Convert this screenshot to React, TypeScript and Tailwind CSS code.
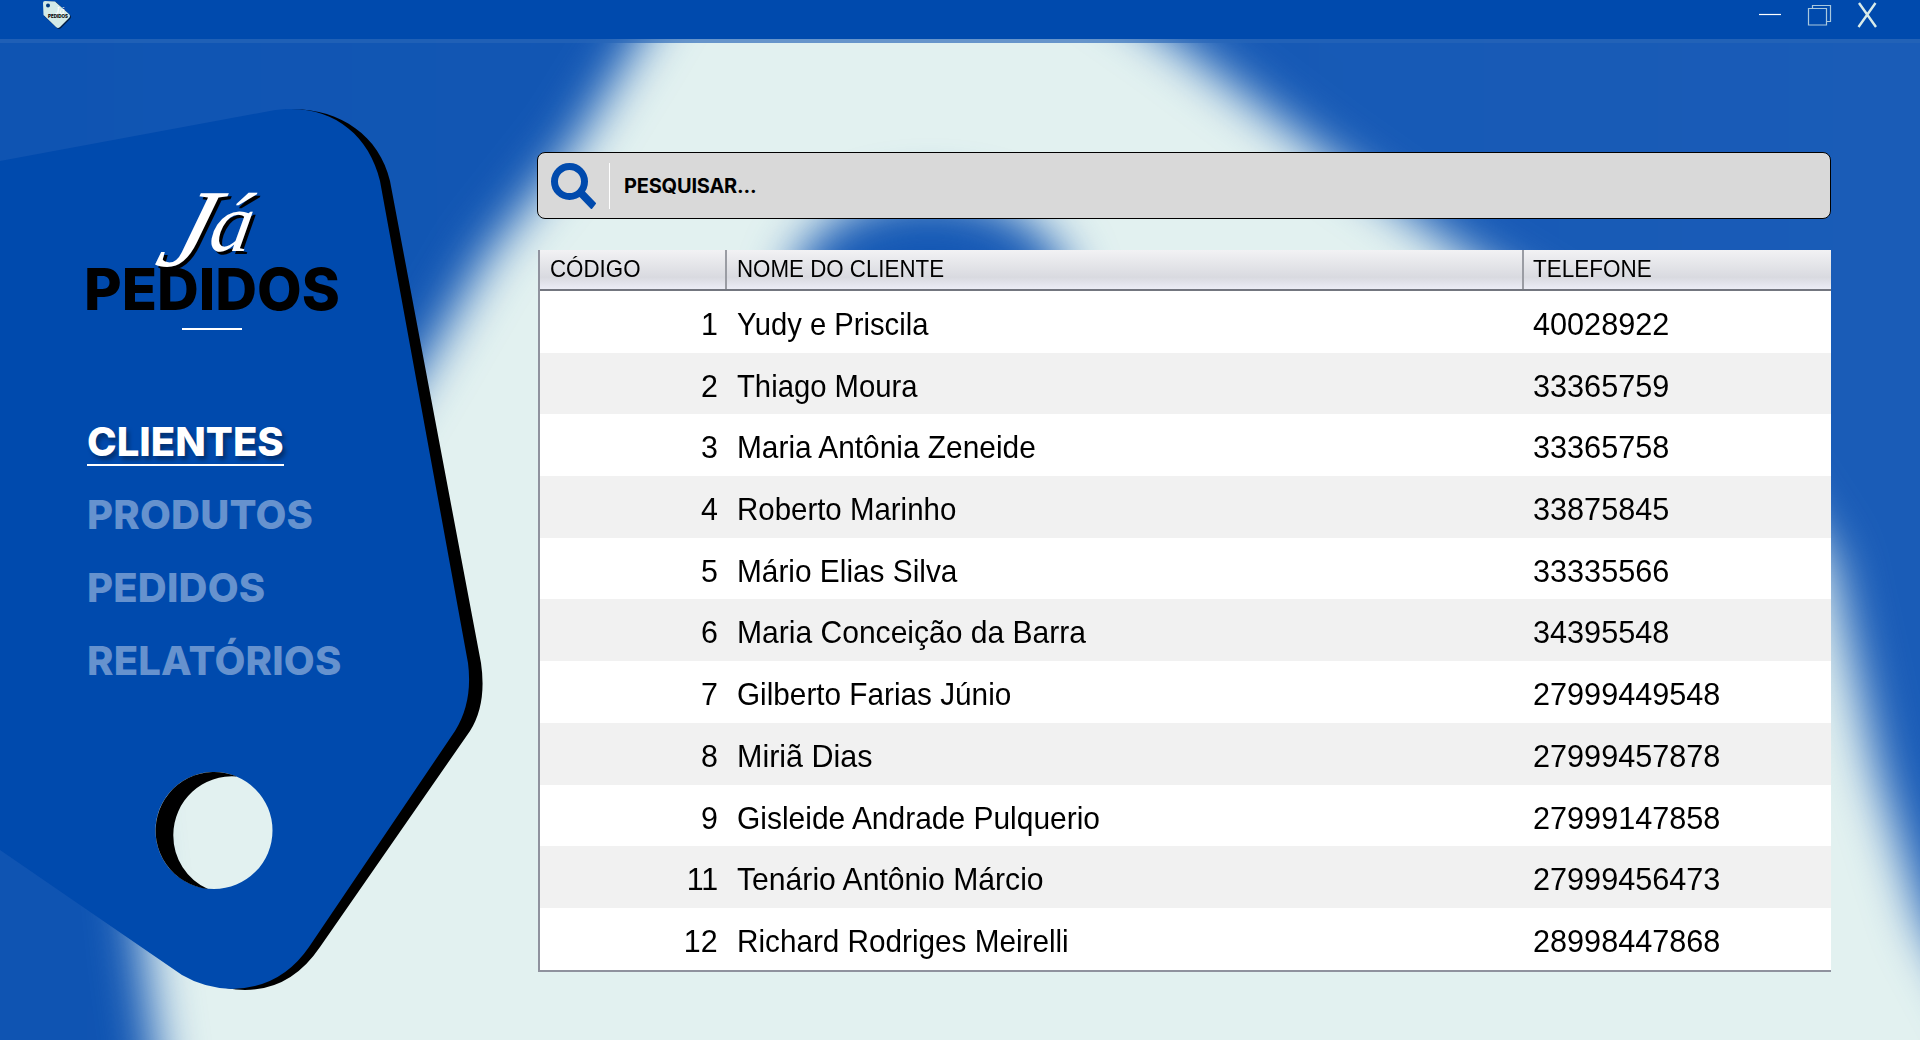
import React from "react";

type Client = { id: number; name: string; phone: string; fit: number };

const clients: Client[] = [
  { id: 1, name: "Yudy e Priscila", phone: "40028922", fit: 0.912 },
  { id: 2, name: "Thiago Moura", phone: "33365759", fit: 0.914 },
  { id: 3, name: "Maria Antônia Zeneide", phone: "33365758", fit: 0.933 },
  { id: 4, name: "Roberto Marinho", phone: "33875845", fit: 0.92 },
  { id: 5, name: "Mário Elias Silva", phone: "33335566", fit: 0.932 },
  { id: 6, name: "Maria Conceição da Barra", phone: "34395548", fit: 0.939 },
  { id: 7, name: "Gilberto Farias Júnio", phone: "27999449548", fit: 0.929 },
  { id: 8, name: "Miriã Dias", phone: "27999457878", fit: 0.953 },
  { id: 9, name: "Gisleide Andrade Pulquerio", phone: "27999147858", fit: 0.936 },
  { id: 11, name: "Tenário Antônio Márcio", phone: "27999456473", fit: 0.942 },
  { id: 12, name: "Richard Rodriges Meirelli", phone: "28998447868", fit: 0.928 },
];

const menu = ["CLIENTES", "PRODUTOS", "PEDIDOS", "RELATÓRIOS"];

function Backdrop() {
  return (
    <svg className="absolute inset-0 h-full w-full" viewBox="0 0 1920 1040">
      <defs>
        <filter id="soft" x="-20%" y="-20%" width="140%" height="140%" colorInterpolationFilters="sRGB">
          <feGaussianBlur stdDeviation="24" />
        </filter>
        <linearGradient id="tone" gradientUnits="userSpaceOnUse" x1="0" y1="0" x2="1920" y2="0">
          <stop offset="0" stopColor="#0f54b2" />
          <stop offset="1" stopColor="#1a5cb7" />
        </linearGradient>
      </defs>
      <rect width="1920" height="1040" fill="#e2f1f0" />
      <g filter="url(#soft)" fill="url(#tone)">
        <path d="M-100 -100 H720 L637 43 L574 145 L487 255 L420 370 L330 520 H-100 Z" />
        <path d="M-100 700 L118 700 L130 830 L144 960 L168 1140 H-100 Z" />
        <path d="M1000 -80 L1175 43 L1321 152 L1460 250 L1740 420 L1831 560 L1877 770 L1925 925 L2020 1100 V-80 Z" />
        <ellipse cx="930" cy="298" rx="142" ry="104" />
      </g>
    </svg>
  );
}

function TagShape() {
  return (
    <svg className="absolute left-0 top-0 h-[1040px] w-[500px]" viewBox="0 0 500 1040">
      <path
        fill="#000"
        d="M285 109.500 C335 106 379 133 390 181 L481 663 Q487 704 470 731 L320 947 Q291 990 245 990 Q236 990 226 988 L440 700 L380 300 Z"
      />
      <path
        fill="#004aad"
        fillRule="evenodd"
        d="M0 161 L270 111 C325 101 368 130 380 181 L468 663 Q473 702 455 731 L309 947 Q281 988 232 989 Q204 988 182 975 L0 850 Z M272.500 830.500 A58.500 58.500 0 1 0 155.500 830.500 A58.500 58.500 0 1 0 272.500 830.500 Z"
      />
      <path fill="#000" d="M237 776.500 A58.700 58.700 0 1 0 208 889 A58.700 58.700 0 0 1 173.300 835 A58.700 58.700 0 0 1 237 776.500 Z" />
    </svg>
  );
}

function TitleBar() {
  return (
    <header className="relative h-[43px]">
      <div className="flex h-[39px] items-start justify-between bg-[#004aad] px-[42px]">
        <svg className="h-[31px] w-[31px]" viewBox="0 0 31 31">
          <path d="M2 3 Q2 1 4 1 L14 2 L28 15 Q30 17 28 19 L19 28 Q17 30 15 28 L2 16 Z" fill="#001c42" />
          <path d="M1 3 Q1 1 3 1 L13 1.500 L27 14 Q29 16 27 18 L18 27 Q16 29 14 27 L1.500 15 Z" fill="#d3eae7" />
          <circle cx="6" cy="5.500" r="2" fill="#003a80" />
          <text x="13" y="14" fontFamily="Liberation Serif" fontStyle="italic" fontSize="10" fill="#fff">Já</text>
          <text x="6" y="18" fontFamily="Inter" fontWeight="800" fontSize="5" textLength="20" lengthAdjust="spacingAndGlyphs" fill="#000">PEDIDOS</text>
        </svg>
        <svg className="h-[36px] w-[130px]" viewBox="0 0 130 36" fill="none">
          <path d="M11 14.500 H33" stroke="#fff" strokeWidth="1.200" />
          <path d="M60.500 8.500 H78.500 V25 H60.500 Z M64.500 8 V5.500 H82.500 V21.500 H79" stroke="#a9c8de" strokeWidth="1.200" />
          <path d="M111 3 L128 27 M127.500 3 L110.500 27" stroke="#d9ecea" strokeWidth="2.400" />
        </svg>
      </div>
      <div className="h-1 bg-[rgba(39,102,183,0.66)]" />
    </header>
  );
}

function LogoWord() {
  return (
    <g fontFamily="Liberation Serif" fontStyle="italic">
      <text transform="translate(66 76) skewX(-17)" fontSize="111">J</text>
      <text transform="translate(120 61) skewX(-10)" fontSize="84">á</text>
    </g>
  );
}

function Sidebar() {
  return (
    <aside className="relative w-[538px] shrink-0">
      <div className="flex flex-col pl-[87px] pt-[147px]">
        <svg className="h-[150px] w-[260px] overflow-visible" viewBox="0 0 260 150">
          <text x="-3" y="120" fontFamily="Inter" fontWeight="800" fontSize="58" textLength="256" lengthAdjust="spacingAndGlyphs" fill="#000">PEDIDOS</text>
          <g fill="#000" transform="translate(3 2.500)"><LogoWord /></g>
          <g fill="#fff"><LogoWord /></g>
          <path d="M95 139 H155" stroke="#fff" strokeWidth="2" />
        </svg>
        <nav className="mt-[76px] flex flex-col items-start gap-[25px] font-['Inter',sans-serif] text-[40px] font-extrabold leading-[48px]">
          {menu.map((m, i) => (
            <a
              key={m}
              className={
                i === 0
                  ? "border-b-2 border-white pt-[4px] leading-[44px] text-white [text-shadow:3px_4px_4px_rgba(0,0,0,0.35)]"
                  : "tracking-[0.2px] text-[#6692ce]"
              }
            >
              {m}
            </a>
          ))}
        </nav>
      </div>
    </aside>
  );
}

function ClientTable() {
  return (
    <div className="mt-[31px] ml-px flex h-[722px] w-[1293px] flex-col border-b-2 border-l-2 border-[#8f929e] bg-white font-['Liberation_Sans',Arial,sans-serif] text-black">
      <div className="grid h-[41px] shrink-0 grid-cols-[187px_797px_1fr] border-b-2 border-[#73767f] bg-linear-to-b from-[#f2f2f4] via-[#d9dae0] via-70% to-[#ebecf5] text-[24px] leading-[38px]">
        <span className="border-r-2 border-[#9a9ca3] pl-[10px]"><span className="inline-block origin-left scale-x-[0.93]">CÓDIGO</span></span>
        <span className="border-r-2 border-[#9a9ca3] pl-[10px]"><span className="inline-block origin-left scale-x-[0.93]">NOME DO CLIENTE</span></span>
        <span className="pl-[9px]"><span className="inline-block origin-left scale-x-[0.937]">TELEFONE</span></span>
      </div>
      {clients.map((c) => (
        <div key={c.id} className="grid h-[61.700px] shrink-0 grid-cols-[187px_797px_1fr] text-[32px] leading-[66px] even:bg-white odd:bg-[#f1f1f1]">
          <span className="pr-[9px] text-right"><span className="inline-block origin-right scale-x-[0.95]">{c.id}</span></span>
          <span className="pl-[10px]"><span className="inline-block origin-left" style={{ transform: `scaleX(${c.fit})` }}>{c.name}</span></span>
          <span className="pl-[9px]"><span className="inline-block origin-left scale-x-[0.957]">{c.phone}</span></span>
        </div>
      ))}
    </div>
  );
}

export default function App() {
  return (
    <div className="relative h-[1040px] w-[1920px] overflow-hidden bg-[#e1f0ef]">
      <Backdrop />
      <TagShape />
      <TitleBar />
      <div className="relative flex">
        <Sidebar />
        <main className="-ml-px w-[1294px] pt-[109px]">
          <div className="flex h-[67px] items-center rounded-[8px] border border-black bg-[#d9d9d9]">
            <svg className="ml-[13px] h-[46px] w-[46px]" viewBox="0 0 46 46" fill="none" stroke="#004aad">
              <circle cx="18.500" cy="18.500" r="15" strokeWidth="7" />
              <path d="M28 32 L32 28 L44 40.500 L40.500 45 Z" fill="#004aad" strokeWidth="2" strokeLinejoin="round" />
            </svg>
            <div className="ml-[12px] h-[46px] w-px bg-white" />
            <span className="ml-[14px] font-['Inter',sans-serif] text-[20px] font-bold leading-6 tracking-[-0.2px] text-black">PESQUISAR...</span>
          </div>
          <ClientTable />
        </main>
      </div>
    </div>
  );
}
